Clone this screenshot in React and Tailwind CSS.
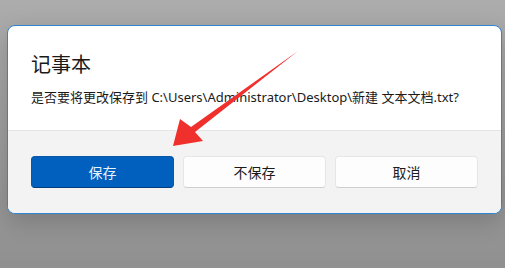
import React from 'react';

// Notepad "save changes?" dialog with a red pointer arrow over it

const font = { fontFamily: '"Noto Sans", "Noto Sans CJK SC", sans-serif' };

const Button = ({ primary, children }) => (
  <button
    className={
      primary
        ? 'flex-1 h-[32px] rounded-[4px] bg-[#0160bd] border border-[#0a57a6] border-b-[#003e7e] text-[14px] text-[#e8f3ff]'
        : 'flex-1 h-[32px] rounded-[4px] bg-[#fdfdfd] border border-[#e6e6e6] border-b-[#cfcfcf] text-[14px] text-[#1b1b1b]'
    }
  >
    {children}
  </button>
);

const Arrow = () => (
  <svg className="absolute left-0 top-0" width="505" height="268" viewBox="0 0 505 268">
    <polygon
      points="298,51 191,127 180,119 173,146 203,141 195,132"
      fill="#f0302c"
    />
  </svg>
);

export default function App() {
  return (
    <div
      className="relative w-[505px] h-[268px] overflow-hidden bg-gradient-to-b from-[#acacac] to-[#909090] pt-[25px] pl-[7px]"
      style={font}
    >
      <div className="w-[495px] h-[189px] rounded-[8px] border border-[#2f84d6] overflow-hidden bg-white shadow-[0_8px_24px_rgba(0,0,0,0.18)] flex flex-col">
        {/* Content */}
        <div className="h-[105px] px-[23px] pt-[25px] border-b border-[#e5e5e5]">
          <div className="text-[20px] leading-[28px] text-[#1a1a1a]">记事本</div>
          <div className="mt-[9px] text-[13px] leading-[18px] text-[#1a1a1a] whitespace-nowrap">
            是否要将更改保存到 C:\Users\Administrator\Desktop\新建 文本文档.txt?
          </div>
        </div>
        {/* Footer */}
        <div className="flex-1 bg-[#f3f3f3] px-[23px] pt-[25px] flex gap-[9px] items-start">
          <Button primary>保存</Button>
          <Button>不保存</Button>
          <Button>取消</Button>
        </div>
      </div>
      <Arrow />
    </div>
  );
}
